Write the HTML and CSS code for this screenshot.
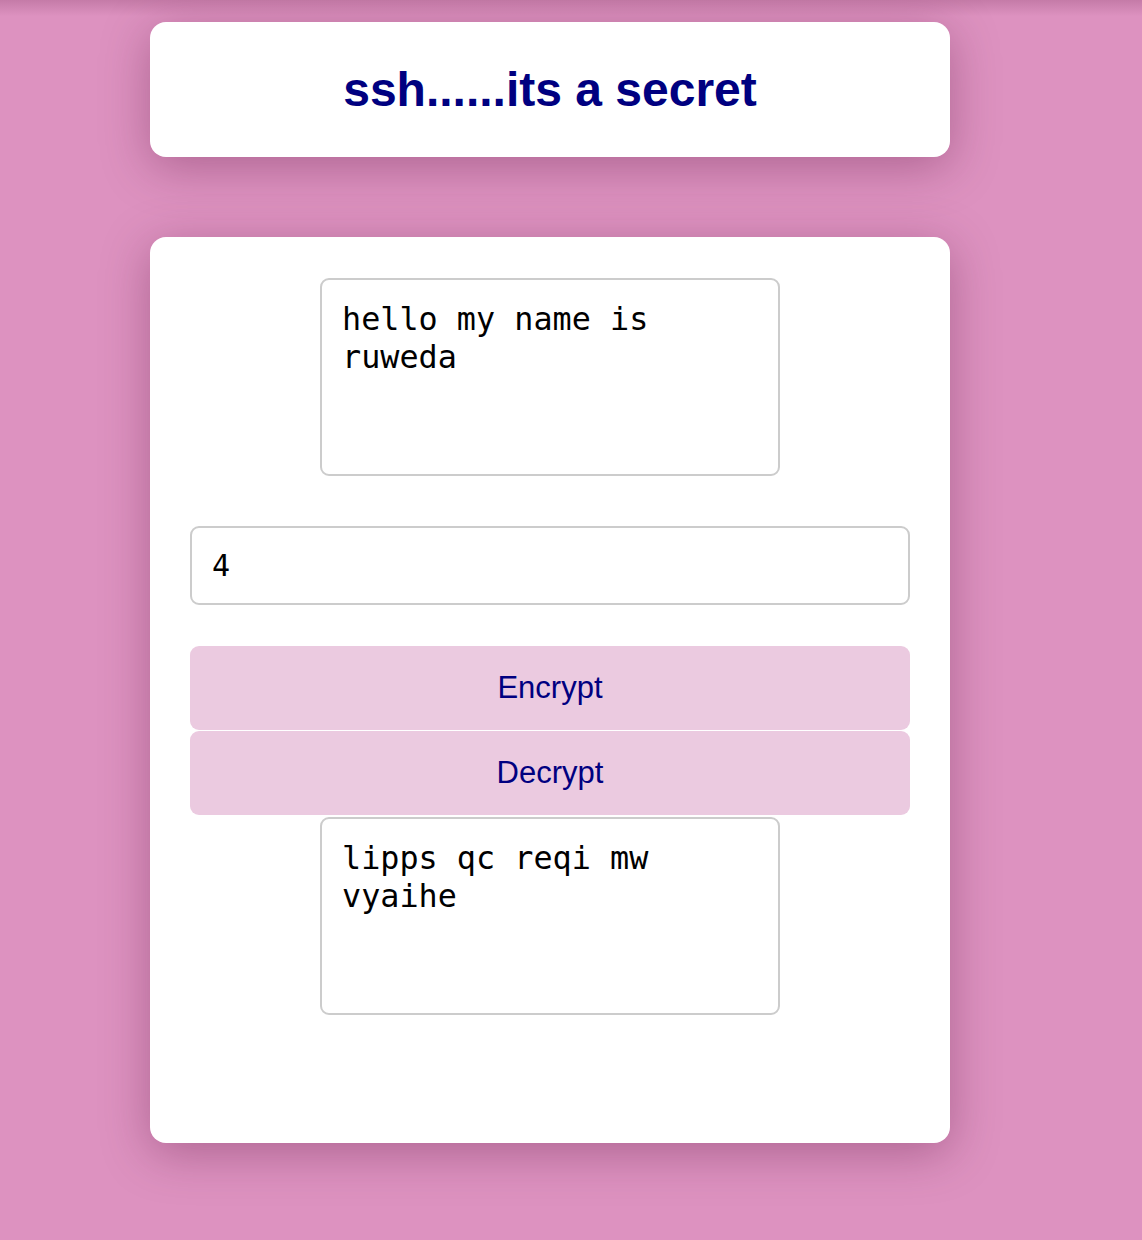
FILE: index.html
```html
<!DOCTYPE html>
<html lang="en">
<head>
<meta charset="utf-8">
<title>ssh......its a secret</title>
<link rel="stylesheet" href="styles.css">
</head>
<body>
<div class="page">
  <header class="card header">
    <h1 class="title">ssh......its a secret</h1>
  </header>
  <main class="card main">
    <textarea class="box" spellcheck="false">hello my name is ruweda</textarea>
    <input class="shift" type="text" value="4">
    <button class="btn" type="button">Encrypt</button>
    <button class="btn" type="button">Decrypt</button>
    <textarea class="box out" spellcheck="false">lipps qc reqi mw vyaihe</textarea>
  </main>
</div>
</body>
</html>
```
FILE: styles.css
```css
html, body {
  margin: 0;
  padding: 0;
}
body {
  background:
    linear-gradient(to bottom, rgba(110, 40, 80, 0.22), rgba(110, 40, 80, 0) 16px),
    #dd92c0;
  background-repeat: no-repeat;
  background-color: #dd92c0;
  font-family: "Liberation Sans", Arial, sans-serif;
  min-height: 1240px;
}
.page {
  width: 1100px;
  padding-top: 22px;
}
.card {
  width: 800px;
  margin: 0 auto;
  background: #fff;
  border-radius: 16px;
  box-shadow: 0 10px 48px rgba(90, 20, 60, 0.36);
  box-sizing: border-box;
}
.header {
  height: 135px;
  display: flex;
  align-items: center;
  justify-content: center;
}
.title {
  margin: 0;
  color: #000080;
  font-size: 48px;
  font-weight: bold;
  line-height: 1;
}
.main {
  margin-top: 80px;
  padding: 41px 40px 128px;
  display: flex;
  flex-direction: column;
  align-items: center;
}
.box {
  width: 460px;
  height: 198px;
  box-sizing: border-box;
  border: 2px solid #cccccc;
  border-radius: 9px;
  padding: 20px 20px;
  font-family: "DejaVu Sans Mono", monospace;
  font-size: 31.8px;
  line-height: 38px;
  color: #000;
  resize: none;
  outline: none;
  background: #fff;
  margin: 0;
}
.out {
  margin-top: 2px;
}
.shift {
  margin-top: 50px;
  width: 720px;
  height: 79px;
  box-sizing: border-box;
  border: 2px solid #cccccc;
  border-radius: 9px;
  padding: 0 20px;
  font-family: "DejaVu Sans Mono", monospace;
  font-size: 30px;
  color: #000;
  outline: none;
  background: #fff;
}
.btn {
  width: 720px;
  height: 84px;
  border: none;
  border-radius: 9px;
  background: #ebcae0;
  color: #000080;
  font-family: "Liberation Sans", Arial, sans-serif;
  font-size: 31px;
  padding: 0;
  margin: 0;
  cursor: pointer;
}
.shift + .btn {
  margin-top: 41px;
}
.btn + .btn {
  margin-top: 1px;
}
```
